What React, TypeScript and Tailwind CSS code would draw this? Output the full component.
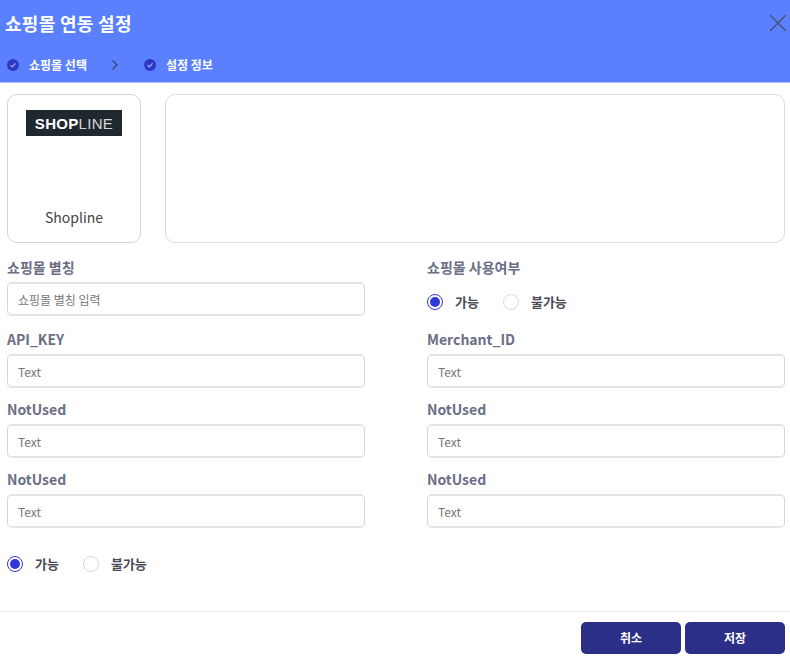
const fontFamily = "font-['Noto_Sans_CJK_KR','Noto_Sans',sans-serif]";

function Radio({ label, checked }: { label: string; checked?: boolean }) {
  return (
    <label className="flex items-center">
      <span
        className={
          checked
            ? 'w-4 h-4 rounded-full border border-[#3038d8] flex items-center justify-center bg-white'
            : 'w-4 h-4 rounded-full border border-[#d8d8d8] bg-white'
        }
      >
        {checked && <span className="w-2.5 h-2.5 rounded-full bg-[#2f37d6]" />}
      </span>
      <span className="ml-3 text-[13px] font-bold leading-4 text-[#4a4a55]">{label}</span>
    </label>
  );
}

function Field({ label, placeholder = 'Text' }: { label: string; placeholder?: string }) {
  return (
    <div className="h-[70px]">
      <div className="h-[26px] text-sm font-bold leading-[22px] text-[#6b6e85]">{label}</div>
      <input
        readOnly
        placeholder={placeholder}
        className="w-full h-[34px] rounded-[5px] border border-[#d8d8d8] border-y-2 border-y-[#e4e4e4] bg-white px-[10px] text-xs text-[#555] placeholder:text-[#777] outline-none"
      />
    </div>
  );
}

function Step({ label }: { label: string }) {
  return (
    <div className="flex items-center gap-[10px]">
      <span className="w-3 h-3 rounded-full bg-[#2f37c8] flex items-center justify-center">
        <svg width="8" height="8" viewBox="0 0 8 8" fill="none">
          <path d="M1.5 4.2 3.3 6 6.5 2.4" stroke="#a9b4f5" strokeWidth="1.2" />
        </svg>
      </span>
      <span className="text-xs font-bold text-white leading-4">{label}</span>
    </div>
  );
}

export default function App() {
  return (
    <div className={`${fontFamily} w-[790px] h-[662px] bg-white flex flex-col overflow-hidden`}>
      {/* 헤더 */}
      <div className="h-[83px] bg-[#5a80ff] border-b border-[#a9bdf5] pl-[5px] pr-[2px] flex flex-col shrink-0">
        <div className="flex items-center justify-between h-[46px]">
          <h1 className="text-[18px] font-bold text-white leading-none tracking-[0.3px]">쇼핑몰 연동 설정</h1>
          <svg width="20" height="20" viewBox="0 0 20 20" fill="none">
            <path d="M2 2 18 18M18 2 2 18" stroke="#4a5070" strokeWidth="1.4" />
          </svg>
        </div>
        <div className="flex items-center pl-[2px] mt-[11px]">
          <Step label="쇼핑몰 선택" />
          <svg width="8" height="12" viewBox="0 0 8 12" fill="none" className="ml-6 mr-[25px]">
            <path d="M1.5 1.5 6 6 1.5 10.5" stroke="#3c4468" strokeWidth="1.2" />
          </svg>
          <Step label="설정 정보" />
        </div>
      </div>

      <div className="flex-1 pl-[7px] pr-[5px] pt-[11px]">
        {/* 쇼핑몰 카드 */}
        <div className="flex gap-6">
          <div className="w-[134px] h-[149px] rounded-[10px] border border-[#d4d4d4] flex flex-col items-center pt-[15px]">
            <div className="w-24 h-[26px] bg-[#1f282f] flex items-center justify-center text-white text-[15px] leading-none tracking-[0.3px] font-['Liberation_Sans',sans-serif]">
              <span className="font-bold">SHOP</span>
              <span className="font-normal text-[#d5d8da]">LINE</span>
            </div>
            <div className="mt-[71px] text-sm leading-5 text-[#444]">Shopline</div>
          </div>
          <div className="flex-1 h-[149px] rounded-[10px] border border-[#dcdcdc]" />
        </div>

        {/* 입력 폼 */}
        <div className="grid grid-cols-2 gap-x-[62px] mt-[13px]">
          <div className="h-[72px]">
            <Field label="쇼핑몰 별칭" placeholder="쇼핑몰 별칭 입력" />
          </div>
          <div className="h-[72px]">
            <div className="h-[26px] text-sm font-bold leading-[22px] text-[#6b6e85]">쇼핑몰 사용여부</div>
            <div className="flex gap-6 pt-[12px]">
              <Radio label="가능" checked />
              <Radio label="불가능" />
            </div>
          </div>
          <Field label="API_KEY" />
          <Field label="Merchant_ID" />
          <Field label="NotUsed" />
          <Field label="NotUsed" />
          <Field label="NotUsed" />
          <Field label="NotUsed" />
        </div>

        <div className="flex gap-6 mt-[18px]">
          <Radio label="가능" checked />
          <Radio label="불가능" />
        </div>
      </div>

      {/* 하단 버튼 */}
      <div className="h-[51px] border-t border-[#eeeeee] shrink-0 flex justify-end gap-1 px-[5px] pt-[10px]">
        <button className="w-[100px] h-8 rounded-[5px] bg-[#2b2f87] text-white text-xs font-bold">취소</button>
        <button className="w-[100px] h-8 rounded-[5px] bg-[#2b2f87] text-white text-xs font-bold">저장</button>
      </div>
    </div>
  );
}
